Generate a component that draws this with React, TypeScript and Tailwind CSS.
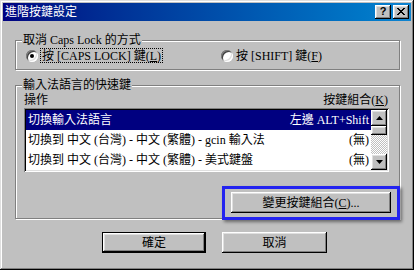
import React from 'react';

const raised =
  'shadow-[inset_-1px_-1px_0_#000,inset_1px_1px_0_#fff,inset_-2px_-2px_0_#808080,inset_2px_2px_0_#dfdfdf]';
const etched = 'border border-[#808080] shadow-[inset_1px_1px_0_#fff,1px_1px_0_#fff]';

const Ul: React.FC<{ c: string }> = ({ c }) => (
  <>
    (<span className="underline underline-offset-1">{c}</span>)
  </>
);

const Radio: React.FC<{ checked?: boolean }> = ({ checked }) => (
  <span className="w-[12px] h-[12px] rounded-full bg-white flex items-center justify-center shadow-[inset_1px_1px_0_#808080,inset_-1px_-1px_0_#fff,inset_2px_2px_0_#404040,inset_-2px_-2px_0_#dfdfdf] shrink-0">
    {checked && <span className="w-[4px] h-[4px] rounded-full bg-black" />}
  </span>
);

const Arrow: React.FC<{ up?: boolean }> = ({ up }) => (
  <svg width="7" height="4" viewBox="0 0 7 4">
    <polygon points={up ? '3.5,0 7,4 0,4' : '0,0 7,0 3.5,4'} fill="#000" />
  </svg>
);

const rows = [
  { name: '切換輸入法語言', keys: '左邊 ALT+Shift', selected: true },
  { name: '切換到 中文 (台灣) - 中文 (繁體) - gcin 輸入法', keys: '(無)' },
  { name: '切換到 中文 (台灣) - 中文 (繁體) - 美式鍵盤', keys: '(無)' },
];

const App: React.FC = () => {
  return (
    <div
      className={`relative w-[414px] h-[270px] bg-[#c0c0c0] p-[3px] flex flex-col text-[12px] leading-[14px] text-black font-['Liberation_Serif','Noto_Sans_CJK_TC',serif] shadow-[inset_-1px_-1px_0_#000,inset_1px_1px_0_#dfdfdf,inset_-2px_-2px_0_#808080,inset_2px_2px_0_#fff]`}
    >
      {/* title bar */}
      <div className="h-[18px] flex items-center pl-[2px] pr-[2px] bg-gradient-to-r from-[#000080] to-[#1084d0]">
        <span className="text-white flex-1">進階按鍵設定</span>
        <div className="flex gap-[2px]">
          <button className={`w-[16px] h-[14px] bg-[#c0c0c0] ${raised} flex items-center justify-center pb-[1px]`}>
            <span className="font-['Liberation_Sans',sans-serif] font-bold text-[11px] leading-[11px]">?</span>
          </button>
          <button className={`w-[16px] h-[14px] bg-[#c0c0c0] ${raised} flex items-center justify-center pb-[1px]`}>
            <svg width="8" height="7" viewBox="0 0 8 7" shapeRendering="crispEdges">
              <rect x="0" y="0" width="2" height="1" />
              <rect x="6" y="0" width="2" height="1" />
              <rect x="1" y="1" width="2" height="1" />
              <rect x="5" y="1" width="2" height="1" />
              <rect x="2" y="2" width="4" height="1" />
              <rect x="3" y="3" width="2" height="1" />
              <rect x="2" y="4" width="4" height="1" />
              <rect x="1" y="5" width="2" height="1" />
              <rect x="5" y="5" width="2" height="1" />
              <rect x="0" y="6" width="2" height="1" />
              <rect x="6" y="6" width="2" height="1" />
            </svg>
          </button>
        </div>
      </div>

      <div className="flex flex-col pl-[12px]">
        {/* caps lock group */}
        <div className={`relative mt-[19px] w-[385px] h-[30px] ${etched} flex items-start pl-[10px] pt-[7px]`}>
          <span className="absolute -top-[8px] left-[6px] px-[1px] bg-[#c0c0c0]">取消 Caps Lock 的方式</span>
          <div className="w-[195px] flex items-center">
            <Radio checked />
            <span className="ml-[2px] px-[1px] h-[15px] border border-dotted border-black flex items-center">
              按 [CAPS LOCK] 鍵<Ul c="L" />
            </span>
          </div>
          <div className="flex items-center">
            <Radio />
            <span className="ml-[3px] h-[15px] flex items-center">
              按 [SHIFT] 鍵<Ul c="F" />
            </span>
          </div>
        </div>

        {/* hotkey group */}
        <div className={`relative mt-[15px] w-[385px] h-[134px] ${etched} flex flex-col pl-[8px] pr-[10px] pt-[8px]`}>
          <span className="absolute -top-[8px] left-[6px] px-[1px] bg-[#c0c0c0]">輸入法語言的快速鍵</span>
          <div className="flex justify-between pr-[1px] h-[12px] leading-[12px]">
            <span>操作</span>
            <span>
              按鍵組合<Ul c="K" />
            </span>
          </div>
          <div className="mt-[2px] h-[64px] bg-white p-[2px] flex shadow-[inset_1px_1px_0_#808080,inset_-1px_-1px_0_#fff,inset_2px_2px_0_#000,inset_-2px_-2px_0_#dfdfdf]">
            <div className="flex-1 flex flex-col overflow-hidden">
              {rows.map((r) => (
                <div
                  key={r.name}
                  className={`h-[20px] shrink-0 flex items-center justify-between pl-[2px] pr-[2px] whitespace-nowrap ${
                    r.selected ? 'bg-[#000080] text-white' : ''
                  }`}
                >
                  <span>{r.name}</span>
                  <span>{r.keys}</span>
                </div>
              ))}
            </div>
            <div className="w-[16px] flex flex-col">
              <div className={`h-[16px] bg-[#c0c0c0] ${raised} flex items-center justify-center`}>
                <Arrow up />
              </div>
              <div className={`h-[9px] bg-[#c0c0c0] ${raised}`} />
              <div className="flex-1 bg-[repeating-conic-gradient(#c0c0c0_0_25%,#ffffff_0_50%)] bg-[length:2px_2px]" />
              <div className={`h-[16px] bg-[#c0c0c0] ${raised} flex items-center justify-center`}>
                <Arrow />
              </div>
            </div>
          </div>
          <button className={`mt-[20px] ml-[207px] w-[160px] h-[21px] bg-[#c0c0c0] ${raised} flex items-center justify-center`}>
            變更按鍵組合<Ul c="C" />...
          </button>
        </div>

        {/* dialog buttons */}
        <div className="mt-[13px] ml-[87px] flex gap-[16px]">
          <button className="w-[104px] h-[21px] border border-black bg-[#c0c0c0]">
            <span className={`w-full h-full flex items-center justify-center ${raised}`}>確定</span>
          </button>
          <button className={`w-[105px] h-[21px] bg-[#c0c0c0] ${raised} flex items-center justify-center`}>
            取消
          </button>
        </div>
      </div>

      {/* highlight annotation */}
      <div className="absolute left-[222px] top-[186px] w-[178px] h-[34px] border-[3px] border-[#2323f0] shadow-[2px_2px_3px_rgba(0,0,0,0.45)] pointer-events-none" />
    </div>
  );
};

export default App;
